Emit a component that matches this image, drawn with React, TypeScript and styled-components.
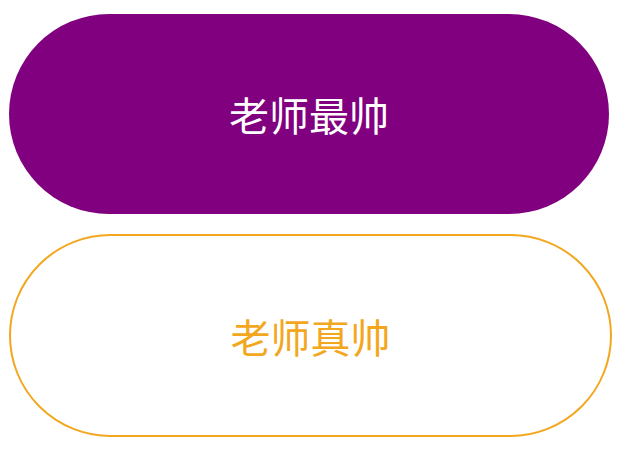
import React from "react";
import styled, { createGlobalStyle } from "styled-components";

const Global = createGlobalStyle`
  body {
    margin: 0;
    background: #fff;
    font-family: "Noto Sans CJK SC", "Noto Sans", sans-serif;
  }
`;

const Page = styled.div`
  display: flex;
  flex-direction: column;
  align-items: flex-start;
  gap: 20px;
  padding: 14px 0 0 9px;
`;

const Pill = styled.button<{ $variant: "solid" | "outline" }>`
  box-sizing: border-box;
  width: ${(p) => (p.$variant === "solid" ? "600px" : "603px")};
  height: ${(p) => (p.$variant === "solid" ? "200px" : "203px")};
  border-radius: 102px;
  border: ${(p) => (p.$variant === "solid" ? "none" : "2px solid #f2a71e")};
  background: ${(p) => (p.$variant === "solid" ? "#800080" : "#fff")};
  color: ${(p) => (p.$variant === "solid" ? "#fff" : "#f2a71e")};
  font-family: "Noto Sans CJK SC", sans-serif;
  font-size: 40px;
  line-height: 1;
  display: flex;
  align-items: center;
  justify-content: center;
  padding: 0;
  cursor: pointer;
`;

export default function App() {
  return (
    <>
      <Global />
      <Page>
        <Pill $variant="solid">老师最帅</Pill>
        <Pill $variant="outline">老师真帅</Pill>
      </Page>
    </>
  );
}
